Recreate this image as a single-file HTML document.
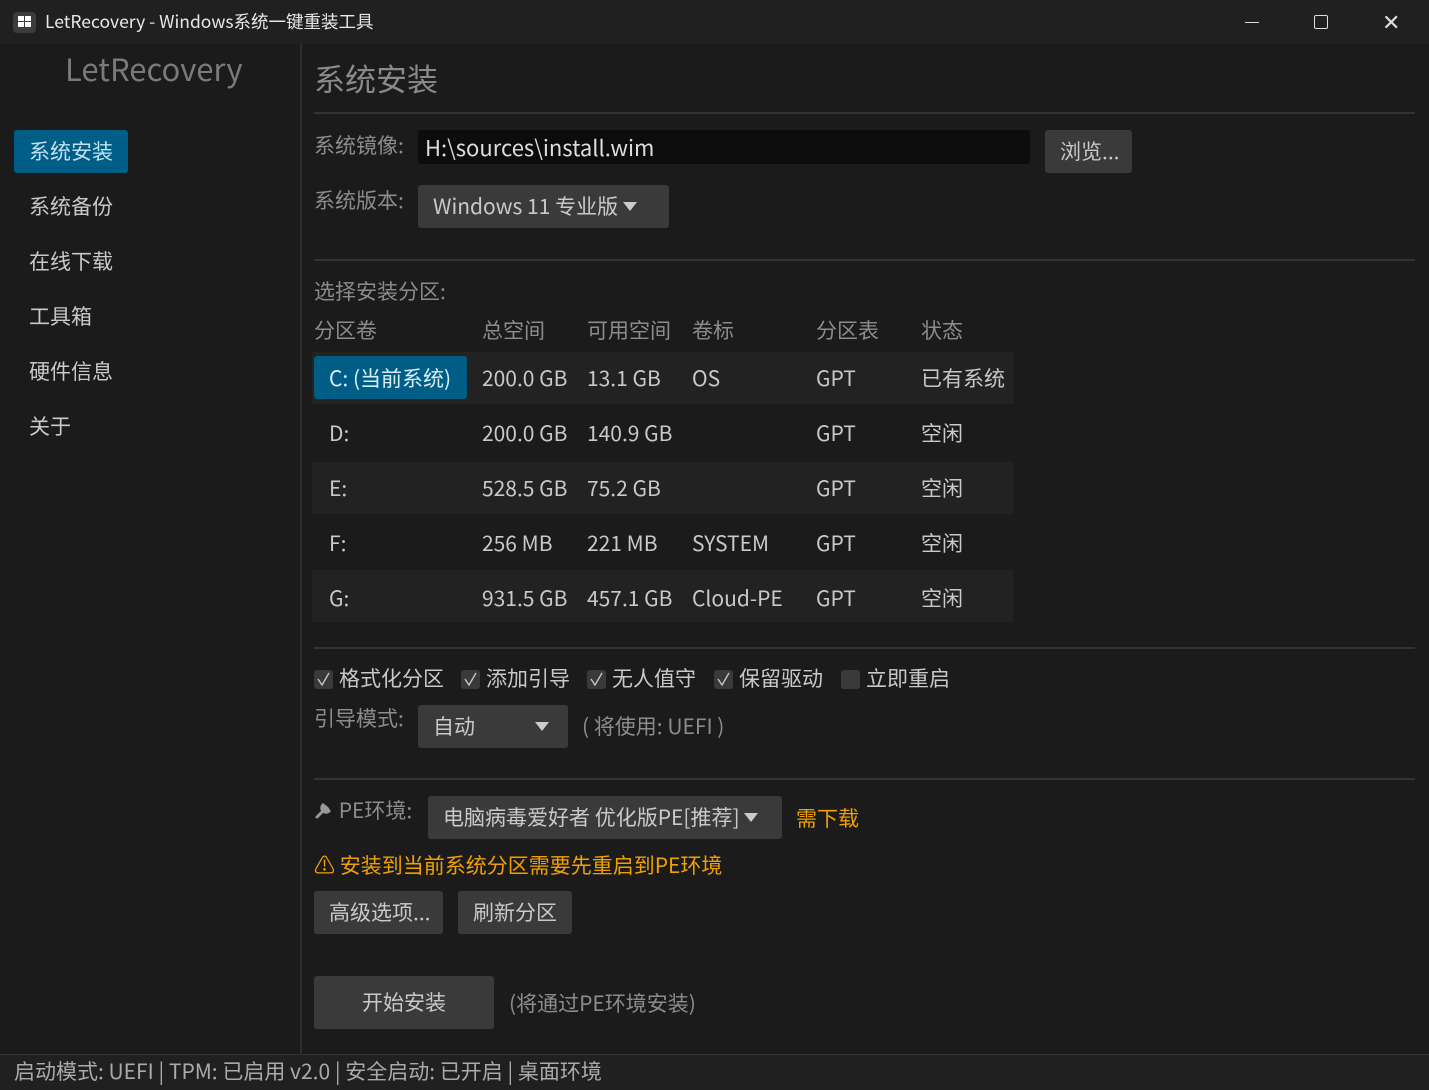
<!DOCTYPE html>
<html><head><meta charset="utf-8"><style>
*{margin:0;padding:0;box-sizing:border-box}
body{width:1429px;height:1090px;background:#1b1b1b;font-family:"Noto Sans CJK SC","Liberation Sans",sans-serif;color:#c9c9c9;position:relative;overflow:hidden;font-size:21px;line-height:26px}
.a{position:absolute;white-space:nowrap}
.lab{color:#8c8c8c}
.btn{position:absolute;background:#3a3a3a;border-radius:3px;color:#c9c9c9;white-space:nowrap}
.hr{position:absolute;left:314px;width:1101px;height:2px;background:#333}
.row{position:absolute;left:312px;width:702px;height:52px}
.cb{display:inline-block;width:19px;height:19px;background:#3a3a3a;border-radius:3px;vertical-align:-3px;margin-right:6px}
.tri{display:inline-block;width:0;height:0;border-left:7px solid transparent;border-right:7px solid transparent;border-top:9px solid #ccc;vertical-align:3px}
</style></head><body>
<div class="a" style="left:0;top:0;width:1429px;height:44px;background:#202020"></div>
<div class="a" style="left:13px;top:12px;width:23px;height:21px;background:#3c3c3c;border-radius:4px"></div>
<div class="a" style="left:18px;top:16px;width:6px;height:5px;background:#fff"></div><div class="a" style="left:25px;top:16px;width:6px;height:5px;background:#fff"></div>
<div class="a" style="left:18px;top:22px;width:6px;height:5px;background:#fff"></div><div class="a" style="left:25px;top:22px;width:6px;height:5px;background:#fff"></div>
<div class="a" style="left:45px;top:9px;font-size:17.5px;color:#e8e8e8">LetRecovery - Windows系统一键重装工具</div>
<div class="a" style="left:1245px;top:22px;width:14px;height:1px;background:#ddd"></div>
<div class="a" style="left:1314px;top:15px;width:14px;height:14px;border:1.5px solid #ddd;border-radius:2px"></div>
<div class="a" style="left:1382px;top:8px;font-size:22px;color:#ddd">✕</div>
<div class="a" style="left:300px;top:44px;width:2px;height:1010px;background:#2e2e2e"></div>
<div class="a" style="left:65px;top:50px;font-size:31px;line-height:36px;color:#7a7a7a">LetRecovery</div>
<div class="a" style="left:14px;top:130px;width:114px;height:43px;background:#005d86;border-radius:3px"></div>
<div class="a" style="left:29px;top:138px;color:#bfe3f5">系统安装</div>
<div class="a" style="left:29px;top:193px">系统备份</div>
<div class="a" style="left:29px;top:248px">在线下载</div>
<div class="a" style="left:29px;top:303px">工具箱</div>
<div class="a" style="left:29px;top:358px">硬件信息</div>
<div class="a" style="left:29px;top:413px">关于</div>
<div class="a" style="left:314px;top:59px;font-size:31px;line-height:38px;color:#8a8a8a">系统安装</div>
<div class="hr" style="top:112px"></div>
<div class="a lab" style="left:314px;top:132px">系统镜像:</div>
<div class="a" style="left:418px;top:130px;width:612px;height:34px;background:#0c0c0c;border-radius:3px;padding:4px 7px;font-size:22px;color:#ddd">H:\sources\install.wim</div>
<div class="btn" style="left:1045px;top:130px;width:87px;height:43px;padding:8px 15px">浏览...</div>
<div class="a lab" style="left:314px;top:187px">系统版本:</div>
<div class="btn" style="left:418px;top:185px;width:251px;height:43px;padding:8px 15px">Windows 11 专业版 <span class="tri"></span></div>
<div class="hr" style="top:259px"></div>
<div class="a lab" style="left:314px;top:278px">选择安装分区:</div>
<div class="a lab" style="left:314px;top:317px">分区卷</div><div class="a lab" style="left:482px;top:317px">总空间</div><div class="a lab" style="left:587px;top:317px">可用空间</div><div class="a lab" style="left:692px;top:317px">卷标</div><div class="a lab" style="left:816px;top:317px">分区表</div><div class="a lab" style="left:921px;top:317px">状态</div>
<div class="row" style="top:352px;background:#222"></div>
<div class="row" style="top:462px;background:#222"></div>
<div class="row" style="top:570px;background:#222"></div>
<div class="a" style="left:314px;top:356px;width:153px;height:43px;background:#005d86;border-radius:3px"></div>
<div class="a" style="left:329px;top:365px;color:#d8eef8">C: (当前系统)</div><div class="a" style="left:482px;top:365px">200.0 GB</div><div class="a" style="left:587px;top:365px">13.1 GB</div><div class="a" style="left:692px;top:365px">OS</div><div class="a" style="left:816px;top:365px">GPT</div><div class="a" style="left:921px;top:365px">已有系统</div>
<div class="a" style="left:329px;top:420px">D:</div><div class="a" style="left:482px;top:420px">200.0 GB</div><div class="a" style="left:587px;top:420px">140.9 GB</div><div class="a" style="left:816px;top:420px">GPT</div><div class="a" style="left:921px;top:420px">空闲</div>
<div class="a" style="left:329px;top:475px">E:</div><div class="a" style="left:482px;top:475px">528.5 GB</div><div class="a" style="left:587px;top:475px">75.2 GB</div><div class="a" style="left:816px;top:475px">GPT</div><div class="a" style="left:921px;top:475px">空闲</div>
<div class="a" style="left:329px;top:530px">F:</div><div class="a" style="left:482px;top:530px">256 MB</div><div class="a" style="left:587px;top:530px">221 MB</div><div class="a" style="left:692px;top:530px">SYSTEM</div><div class="a" style="left:816px;top:530px">GPT</div><div class="a" style="left:921px;top:530px">空闲</div>
<div class="a" style="left:329px;top:585px">G:</div><div class="a" style="left:482px;top:585px">931.5 GB</div><div class="a" style="left:587px;top:585px">457.1 GB</div><div class="a" style="left:692px;top:585px">Cloud-PE</div><div class="a" style="left:816px;top:585px">GPT</div><div class="a" style="left:921px;top:585px">空闲</div>
<div class="hr" style="top:647px"></div>
<div class="a" style="left:314px;top:665px"><svg class="cb" viewBox="0 0 19 19"><path d="M4 9 L8 15 L15 3" stroke="#ccc" stroke-width="1.3" fill="none"/></svg>格式化分区</div>
<div class="a" style="left:461px;top:665px"><svg class="cb" viewBox="0 0 19 19"><path d="M4 9 L8 15 L15 3" stroke="#ccc" stroke-width="1.3" fill="none"/></svg>添加引导</div>
<div class="a" style="left:587px;top:665px"><svg class="cb" viewBox="0 0 19 19"><path d="M4 9 L8 15 L15 3" stroke="#ccc" stroke-width="1.3" fill="none"/></svg>无人值守</div>
<div class="a" style="left:714px;top:665px"><svg class="cb" viewBox="0 0 19 19"><path d="M4 9 L8 15 L15 3" stroke="#ccc" stroke-width="1.3" fill="none"/></svg>保留驱动</div>
<div class="a" style="left:841px;top:665px"><span class="cb"></span>立即重启</div>
<div class="a lab" style="left:314px;top:705px">引导模式:</div>
<div class="btn" style="left:418px;top:705px;width:150px;height:43px;padding:8px 15px">自动<span class="tri" style="position:absolute;left:117px;top:17px"></span></div>
<div class="a lab" style="left:582px;top:713px">( 将使用: UEFI )</div>
<div class="hr" style="top:778px"></div>
<div class="a lab" style="left:314px;top:797px"><svg width="20" height="20" viewBox="0 0 20 20" style="vertical-align:-3px"><path d="M3 16 L10 9 M9 4 a4 4 0 0 0 6 6 l-2-3 z" stroke="#999" stroke-width="3" fill="#999" stroke-linecap="round"/></svg> PE环境:</div>
<div class="btn" style="left:428px;top:796px;width:354px;height:43px;padding:8px 15px">电脑病毒爱好者 优化版PE[推荐] <span class="tri"></span></div>
<div class="a" style="left:796px;top:805px;color:#f0a000">需下载</div>
<div class="a" style="left:314px;top:852px;color:#f0a000">⚠ 安装到当前系统分区需要先重启到PE环境</div>
<div class="btn" style="left:314px;top:891px;width:129px;height:43px;padding:8px 15px">高级选项...</div>
<div class="btn" style="left:458px;top:891px;width:114px;height:43px;padding:8px 15px">刷新分区</div>
<div class="btn" style="left:314px;top:976px;width:180px;height:53px;padding:13px 0;text-align:center">开始安装</div>
<div class="a lab" style="left:509px;top:990px">(将通过PE环境安装)</div>
<div class="a" style="left:0;top:1054px;width:1429px;height:36px;background:#202020;border-top:1px solid #333"></div>
<div class="a" style="left:14px;top:1058px;color:#aaa">启动模式: UEFI | TPM: 已启用 v2.0 | 安全启动: 已开启 | 桌面环境</div>
</body></html>
